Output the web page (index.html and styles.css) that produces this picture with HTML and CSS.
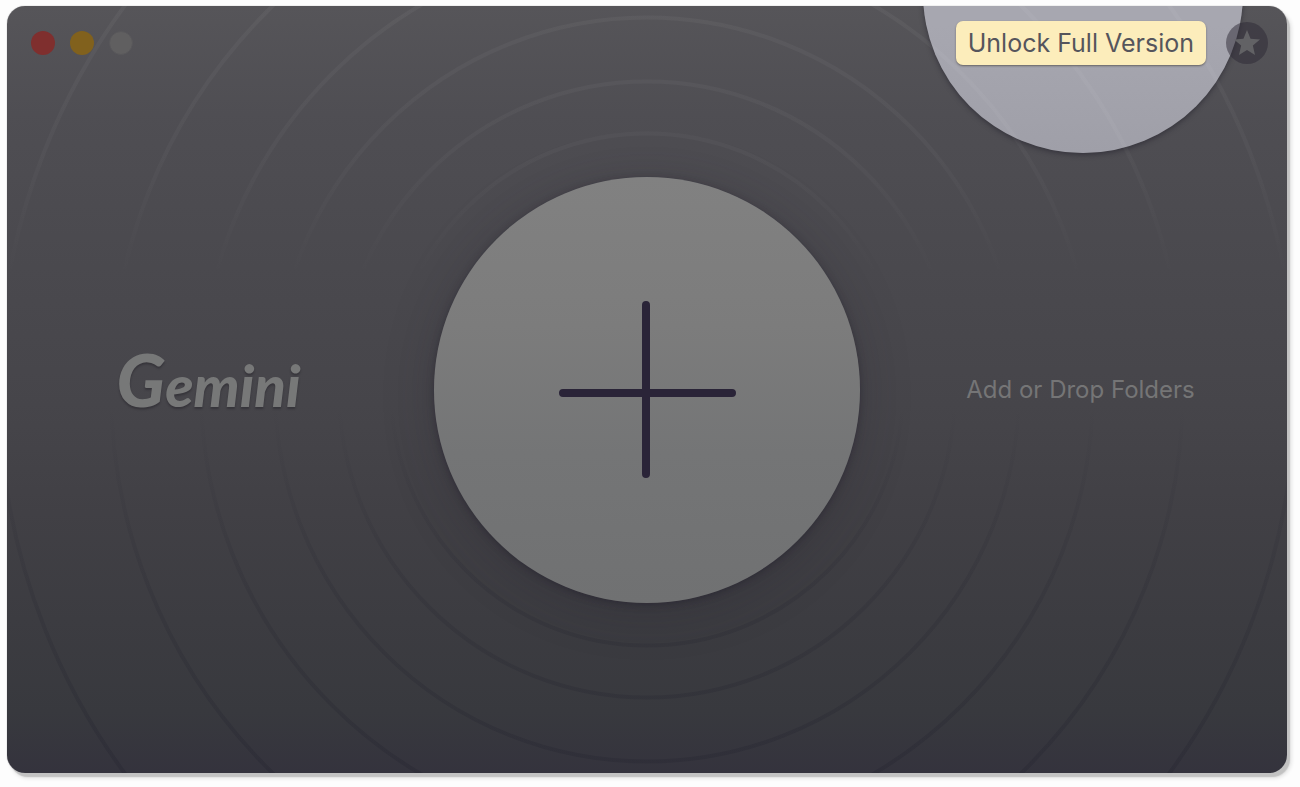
FILE: index.html
```html
<!DOCTYPE html>
<html lang="en">
<head>
    <meta charset="UTF-8">
    <meta name="viewport" content="width=device-width, initial-scale=1.0">
    <title>Gemini</title>
    <link rel="stylesheet" href="styles.css">
</head>
<body>
    <div class="window">
        <!-- spotlight behind the unlock button -->
        <div class="spotlight"></div>

        <!-- background rings -->
        <svg class="rings" aria-hidden="true">
            <defs>
                <linearGradient id="ringStroke" gradientUnits="userSpaceOnUse" x1="0" y1="0" x2="0" y2="100%">
                    <stop offset="0" stop-color="#ffffff" stop-opacity="0.04"/>
                    <stop offset="0.18" stop-color="#ffffff" stop-opacity="0.03"/>
                    <stop offset="0.36" stop-color="#ffffff" stop-opacity="0"/>
                    <stop offset="0.52" stop-color="#20202c" stop-opacity="0"/>
                    <stop offset="0.75" stop-color="#20202c" stop-opacity="0.16"/>
                    <stop offset="1" stop-color="#20202c" stop-opacity="0.26"/>
                </linearGradient>
            </defs>
            <circle cx="50%" cy="50%" r="256"/>
            <circle cx="50%" cy="50%" r="308"/>
            <circle cx="50%" cy="50%" r="372"/>
            <circle cx="50%" cy="50%" r="446"/>
            <circle cx="50%" cy="50%" r="536"/>
            <circle cx="50%" cy="50%" r="648"/>
        </svg>

        <header class="titlebar">
            <div class="lights">
                <button class="light close" aria-label="Close"></button>
                <button class="light minimize" aria-label="Minimize"></button>
                <button class="light zoom" aria-label="Zoom" disabled></button>
            </div>
            <div class="actions">
                <button class="unlock">Unlock Full Version</button>
                <button class="star" aria-label="Rate">
                    <svg viewBox="0 0 24 24" width="26" height="26">
                        <path d="M12 0 L15.3 8 L24 8.7 L17.4 14.4 L19.4 23 L12 18.4 L4.6 23 L6.6 14.4 L0 8.7 L8.7 8 Z"/>
                    </svg>
                </button>
            </div>
        </header>

        <main class="content">
            <h1 class="logo"><span class="logo-cap">G</span>emini</h1>
            <button class="add" aria-label="Add folders">
                <svg viewBox="0 0 178 178" width="178" height="178">
                    <path d="M88 4 V173 M5 92 H174"/>
                </svg>
            </button>
            <p class="hint">Add or Drop Folders</p>
        </main>
    </div>
</body>
</html>
```
FILE: styles.css
```css
* {
    box-sizing: border-box;
}
body {
    margin: 0;
    min-height: 100vh;
    padding: 6px 13px 14px 7px;
    display: flex;
    background-color: #fdfdfd;
    font-family: Inter, "Liberation Sans", sans-serif;
}
button {
    padding: 0;
    border: none;
    font-family: inherit;
}
.window {
    position: relative;
    flex: 1;
    display: flex;
    flex-direction: column;
    border-radius: 18px;
    background: linear-gradient(#565559 0%, #4f4e53 14%, #4a494e 34%, #46454a 52%, #414045 66%, #3c3c41 80%, #38393e 92%, #34333d 100%);
    box-shadow: 3px 4px 1px #c2c2c2, 4px 5px 4px #dcdcdc, 0 0 1px #777777;
}

/* decoration */
.spotlight {
    position: absolute;
    top: -173px;
    right: 44px;
    width: 320px;
    height: 320px;
    border-radius: 50%;
    background: linear-gradient(#a7a7b0 60%, #9f9fa8 100%);
    box-shadow: 0 2px 5px rgba(30, 28, 40, 0.5);
    clip-path: inset(173px -10px -10px -10px);
}
.rings {
    position: absolute;
    top: 0;
    left: 0;
    width: 100%;
    height: 100%;
    border-radius: 18px;
}
.rings circle {
    fill: none;
    stroke: url(#ringStroke);
    stroke-width: 4;
}

/* title bar */
.titlebar {
    position: relative;
    height: 74px;
    padding: 0 19px 0 24px;
    display: flex;
    align-items: center;
    justify-content: space-between;
}
.lights {
    display: flex;
    align-items: center;
    gap: 15px;
}
.light {
    width: 24px;
    height: 24px;
    border-radius: 50%;
}
.close {
    background-color: #7f2f2e;
}
.minimize {
    background-color: #81611d;
}
.zoom {
    border: 1px solid #58575a;
    background-color: #605f60;
}
.actions {
    display: flex;
    align-items: center;
    gap: 20px;
}
.unlock {
    height: 44px;
    padding: 0 12px;
    border-radius: 7px;
    background-color: #fcedbb;
    color: #55555c;
    font-size: 25px;
    box-shadow: 0 1px 2px rgba(60, 55, 50, 0.6);
}
.star {
    width: 42px;
    height: 42px;
    border-radius: 50%;
    display: flex;
    align-items: center;
    justify-content: center;
    background-color: rgba(43, 40, 52, 0.5);
}
.star svg {
    fill: #626265;
}

/* main area */
.content {
    position: relative;
    flex: 1;
    padding-bottom: 74px;
    display: grid;
    grid-template-columns: 1fr 426px 1fr;
    align-items: center;
    text-align: center;
}
.logo {
    margin: 0;
    padding: 0 24px 16px 0;
    color: #777878;
    font-family: Lato, "Liberation Sans", sans-serif;
    font-size: 58px;
    font-weight: 900;
    font-style: italic;
    line-height: 72px;
    text-shadow: 0 2px 2px rgba(30, 28, 36, 0.4);
}
.logo-cap {
    font-size: 72px;
}
.add {
    height: 426px;
    border-radius: 50%;
    display: flex;
    align-items: center;
    justify-content: center;
    background: linear-gradient(#818181 0%, #7c7c7c 35%, #747576 65%, #707172 100%);
    box-shadow: 0 2px 6px rgba(35, 32, 45, 0.5), 0 6px 50px rgba(35, 32, 45, 0.25);
}
.add path {
    fill: none;
    stroke: #2a2438;
    stroke-width: 8;
    stroke-linecap: round;
}
.hint {
    margin: 0;
    padding-left: 14px;
    color: #757576;
    font-size: 24px;
}
```
